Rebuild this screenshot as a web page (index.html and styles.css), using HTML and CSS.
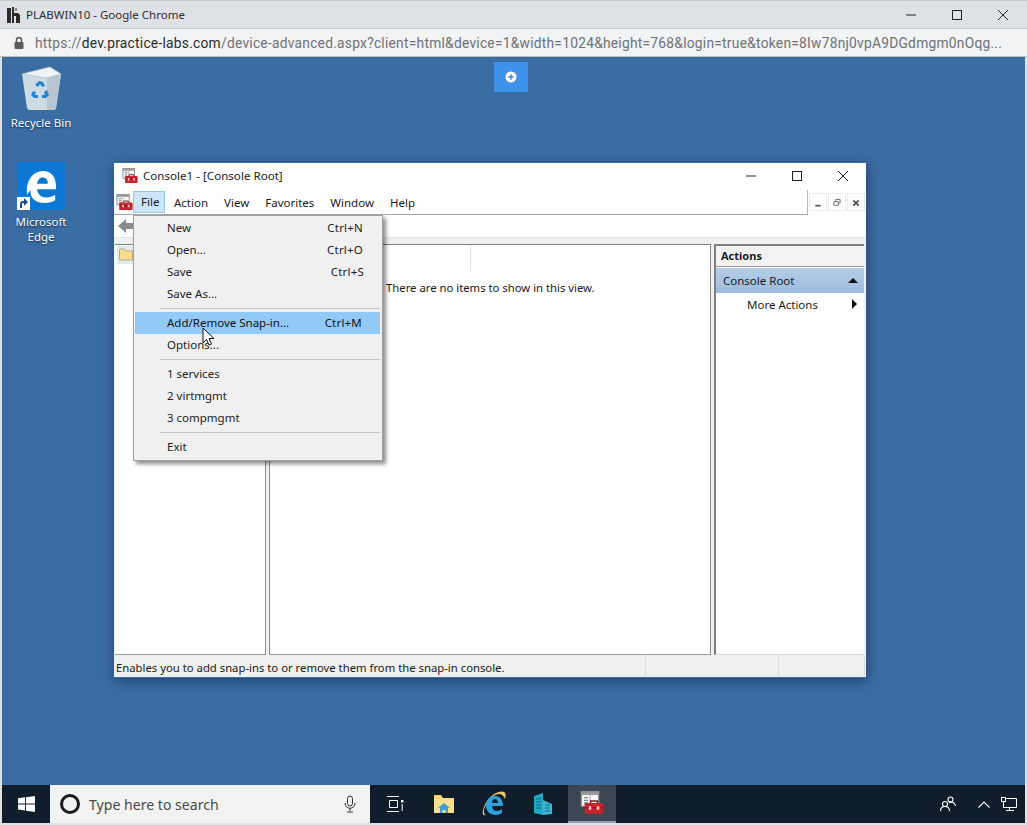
FILE: index.html
```html
<!DOCTYPE html>
<html lang="en">
<head>
<meta charset="utf-8">
<title>PLABWIN10 - Google Chrome</title>
<link rel="stylesheet" href="styles.css">
</head>
<body>
<svg class="defs" width="0" height="0" aria-hidden="true">
  <symbol id="mmc" viewBox="0 0 18 18">
    <rect x="1" y="0.5" width="13" height="11" fill="#f4f4f4" stroke="#8c8c8c"/>
    <rect x="1" y="0.5" width="13" height="2.5" fill="#9a9a9a"/>
    <path d="M3 5h3M3 7h3M3 9h3" stroke="#8a8a8a"/>
    <path d="M7.5 3v8" stroke="#bdbdbd"/>
    <path d="M7 9h9.500a1 1 0 0 1 1 1v7H3.500v-7a1 1 0 0 1 1-1z" fill="#c8242c"/>
    <path d="M8 9V7.500h5V9" fill="none" stroke="#7c1a1e"/>
    <path d="M3.500 12.500h14" stroke="#8a1a20"/>
    <rect x="6.500" y="11.500" width="2" height="2.500" fill="#f0c8c0"/>
    <rect x="12.500" y="11.500" width="2" height="2.500" fill="#f0c8c0"/>
  </symbol>
</svg>

<header class="chrome-title">
  <svg class="lab-logo" width="16" height="18" viewBox="0 0 16 18"><path d="M1 2h4v15H1zM6 1h2v6h4l2 2v8h-4v-7H8v7H6z" fill="#2b2b2b"/><path d="M9 2h2v3H9z" fill="#8a8a8a"/></svg>
  <span class="chrome-title-text">PLABWIN10 - Google Chrome</span>
  <div class="caption-btns caption-chrome">
    <svg width="46" height="28" viewBox="0 0 46 28"><path d="M18 15h10" stroke="#222" stroke-width="1"/></svg>
    <svg width="46" height="28" viewBox="0 0 46 28"><rect x="18.500" y="10.500" width="9" height="9" fill="none" stroke="#222"/></svg>
    <svg width="46" height="28" viewBox="0 0 46 28"><path d="M18 10l10 10M28 10L18 20" stroke="#222"/></svg>
  </div>
</header>
<div class="chrome-url">
  <svg width="12" height="14" viewBox="0 0 12 14"><rect x="1.500" y="6" width="9" height="7" rx="1" fill="#5a5a5a"/><path d="M3.500 6.500V4a2.500 2.500 0 0 1 5 0v2.500" fill="none" stroke="#5a5a5a" stroke-width="1.500"/></svg>
  <span class="url"><span class="url-dim">https://</span><span class="url-host">dev.practice-labs.com</span><span class="url-dim">/device-advanced.aspx?client=html&amp;device=1&amp;width=1024&amp;height=768&amp;login=true&amp;token=8Iw78nj0vpA9DGdmgm0nOqg...</span></span>
</div>

<main class="desktop">
  <div class="plus-btn">
    <svg width="12" height="12" viewBox="0 0 12 12"><circle cx="6" cy="6" r="5.500" fill="#fff"/><path d="M6 3.200v5.600M3.200 6h5.600" stroke="#3f92ec" stroke-width="1.600"/></svg>
  </div>

  <div class="desk-icon desk-bin">
    <svg width="42" height="46" viewBox="0 0 42 46">
      <path d="M2 8L30 1l11 7-5 34a3 3 0 0 1-3 2H10a3 3 0 0 1-3-2z" fill="#cfdbe4"/>
      <path d="M2 8L30 1l11 7-14 4z" fill="#eef3f6" stroke="#a9b8c3" stroke-width=".6"/>
      <path d="M27 12l14-4-5 34a3 3 0 0 1-3 2h-6z" fill="#b7c6d1"/>
      <path d="M15 19l4-4 4 1 2 4-3 1-2-3-2 3zM27 24l2 5-3 3h-4v-3h3l-1-3zM13 25l3 1-1 3 3 0v3h-4l-3-3z" fill="#1f86d6"/>
    </svg>
    <span class="desk-label">Recycle Bin</span>
  </div>

  <div class="desk-icon desk-edge">
    <div class="edge-tile">
      <svg width="31" height="33" viewBox="0 0 34 36"><path d="M1 20C2 8 10 1 19 1c9 0 14 7 14 18v2H12c1 6 5 9 10 9 4 0 7-1 10-3v6c-3 2-7 3-11 3C11 36 4 31 5 22c-1 1-3 3-4 5zM12 15h12c0-4-2-7-6-7-3 0-5 3-6 7z" fill="#fff"/></svg>
      <span class="shortcut"><svg width="12" height="12" viewBox="0 0 12 12"><path d="M3 11V7c0-2 1-3 3-3h1V1l4 4-4 4V6H6C5 6 5 7 5 8v3z" fill="#1c4e8a"/></svg></span>
    </div>
    <span class="desk-label">Microsoft Edge</span>
  </div>

  <section class="window">
    <div class="win-title">
      <svg class="mmc-ic" width="16" height="16"><use href="#mmc"/></svg>
      <span class="win-title-text">Console1 - [Console Root]</span>
      <div class="caption-btns">
        <svg width="46" height="28" viewBox="0 0 46 28"><path d="M18 15h10" stroke="#222"/></svg>
        <svg width="46" height="28" viewBox="0 0 46 28"><rect x="18.500" y="10.500" width="9" height="9" fill="none" stroke="#222"/></svg>
        <svg width="46" height="28" viewBox="0 0 46 28"><path d="M18 10l10 10M28 10L18 20" stroke="#222"/></svg>
      </div>
    </div>
    <nav class="win-menu">
      <svg class="mmc-menu" width="17" height="17"><use href="#mmc"/></svg>
      <span class="mi mi-active">File</span>
      <span class="mi">Action</span>
      <span class="mi">View</span>
      <span class="mi">Favorites</span>
      <span class="mi">Window</span>
      <span class="mi">Help</span>
      <div class="mdi-btns">
        <span class="mdi-btn"><svg width="18" height="18" viewBox="0 0 18 18"><path d="M6 12h6" stroke="#555" stroke-width="2"/></svg></span>
        <span class="mdi-btn"><svg width="18" height="18" viewBox="0 0 18 18"><path d="M7.500 7V5h5v4h-2M5.500 7.500h5v4h-5z" fill="none" stroke="#666"/></svg></span>
        <span class="mdi-btn"><svg width="18" height="18" viewBox="0 0 18 18"><path d="M6 6l6 6M12 6l-6 6" stroke="#555" stroke-width="2"/></svg></span>
      </div>
    </nav>
    <div class="win-toolbar">
      <svg width="16" height="16" viewBox="0 0 16 16"><path d="M8 1v4h8v6H8v4L0 8z" fill="#8c8c8c"/></svg>
    </div>
    <div class="win-band"></div>
    <div class="panes">
      <div class="pane pane-tree">
        <div class="tree-root"><svg width="14" height="13" viewBox="0 0 14 13"><path d="M.5 12V2l1-1h4l1 2h7v9z" fill="#f6dc90" stroke="#c9ad62"/></svg></div>
      </div>
      <div class="pane pane-list">
        <div class="list-head"><span class="list-col"></span></div>
        <p class="empty-msg">There are no items to show in this view.</p>
      </div>
      <aside class="pane-actions">
        <div class="act-head">Actions</div>
        <div class="act-section"><span>Console Root</span><span class="tri-up"></span></div>
        <div class="act-item"><span>More Actions</span><span class="tri-right"></span></div>
      </aside>
    </div>
    <footer class="statusbar">
      <span class="status-main">Enables you to add snap-ins to or remove them from the snap-in console.</span>
      <span class="status-cell"></span>
      <span class="status-cell status-last"></span>
    </footer>
  </section>

  <div class="file-menu">
    <div class="fm-row"><span>New</span><span class="fm-key">Ctrl+N</span></div>
    <div class="fm-row"><span>Open...</span><span class="fm-key">Ctrl+O</span></div>
    <div class="fm-row"><span>Save</span><span class="fm-key fm-key-s">Ctrl+S</span></div>
    <div class="fm-row"><span>Save As...</span></div>
    <div class="fm-sep"></div>
    <div class="fm-row fm-hot"><span>Add/Remove Snap-in...</span><span class="fm-key">Ctrl+M</span></div>
    <div class="fm-row"><span>Options...</span></div>
    <div class="fm-sep"></div>
    <div class="fm-row"><span>1 services</span></div>
    <div class="fm-row"><span>2 virtmgmt</span></div>
    <div class="fm-row"><span>3 compmgmt</span></div>
    <div class="fm-sep"></div>
    <div class="fm-row"><span>Exit</span></div>
  </div>

  <svg class="cursor" width="14" height="20" viewBox="0 0 14 20"><path d="M1 1v15l3.500-3.500L7 18l2.500-1-2.500-5.500h5z" fill="#fff" stroke="#111" stroke-width="1"/></svg>
</main>

<footer class="taskbar">
  <div class="start"><svg width="17" height="16" viewBox="0 0 18 17"><path d="M0 2.500L7.500 1.400v6.500H0zM8.500 1.300L18 0v7.900H8.500zM0 8.900h7.500v6.600L0 14.400zM8.500 8.900H18V17l-9.500-1.300z" fill="#fff"/></svg></div>
  <div class="search">
    <span class="cortana"></span>
    <span class="search-text">Type here to search</span>
    <svg class="mic" width="12" height="18" viewBox="0 0 12 18"><rect x="3.500" y="1" width="5" height="10" rx="2.500" fill="none" stroke="#333"/><path d="M1 8c0 7 10 7 10 0M6 13v3M3 17h6" fill="none" stroke="#333"/></svg>
  </div>
  <div class="task-icons">
    <span class="tb-slot"><svg width="18" height="16" viewBox="0 0 18 16"><path d="M1 .5h12M1 15.500h12M3.500 4.500h8v7h-8z" fill="none" stroke="#fff"/><rect x="15" y="4" width="2.500" height="2.500" fill="#fff"/><path d="M16.200 8v7" stroke="#fff"/></svg></span>
    <span class="tb-slot"><svg width="22" height="20" viewBox="0 0 22 20"><path d="M1 19V1h7l2 3h11v15z" fill="#f5d672"/><path d="M1 5h20v14H1z" fill="#f9e08c"/><path d="M7 19v-6h8v6h-2.500v-3h-3v3z" fill="#3f9fd6"/><path d="M5 14l6-5 6 5z" fill="#3f9fd6"/></svg></span>
    <span class="tb-slot"><svg width="24" height="26" viewBox="0 0 24 26"><path d="M4 24C-1 26 0 18 5 10 10 3 18-1 22 1c2 1 2 4 1 7-1-3-3-5-6-5C12 3 6 9 3 16c-2 5-1 7 1 8z" fill="#e8c766"/><path d="M4 15c0-6 4-10 9-10s8 4 8 10H10c0 3 2 5 5 5 2 0 4-1 5-2v4c-2 1-4 2-6 2-6 0-10-4-10-9zm6-3h6c0-2-1-4-3-4s-3 2-3 4z" fill="#2da3dc"/></svg></span>
    <span class="tb-slot"><svg width="22" height="24" viewBox="0 0 20 24"><path d="M1 4l9-3v22l-9-2z" fill="#20a8c4"/><path d="M10 8l9 4v10l-9 1z" fill="#3fb7d2"/><path d="M3 7h5M3 10h5M3 13h5M3 16h5M12 13h5M12 16h5M12 19h5" stroke="#0b6d87" stroke-width="1"/></svg></span>
    <span class="tb-slot tb-active"><svg width="24" height="26"><use href="#mmc"/></svg></span>
  </div>
  <div class="tray">
    <svg width="16" height="16" viewBox="0 0 16 16"><circle cx="10.500" cy="3.500" r="2.500" fill="none" stroke="#fff" stroke-width="1.100"/><circle cx="5" cy="8" r="2.500" fill="none" stroke="#fff" stroke-width="1.100"/><path d="M.5 15c0-3 2-4.500 4.500-4.500S9.500 12 9.500 15M9 7c1-.5 1.500-1 1.500-1 2.500 0 4.500 1.500 5 4" fill="none" stroke="#fff" stroke-width="1.100"/></svg>
    <svg class="tray-chev" width="12" height="7" viewBox="0 0 12 7"><path d="M.5 6.500L6 1l5.500 5.500" fill="none" stroke="#fff" stroke-width="1.100"/></svg>
    <svg width="16" height="14" viewBox="0 0 16 14"><path d="M4.500 1.500h11v9h-13V6M8.500 10.500v3M5 13.500h8" fill="none" stroke="#fff"/><rect x=".5" y=".5" width="4" height="4" fill="none" stroke="#fff"/><path d="M2.500 4.500v6" stroke="#fff"/></svg>
  </div>
</footer>
</body>
</html>
```

FILE: styles.css
```css
* { box-sizing: border-box; }
html, body { margin: 0; padding: 0; }
body {
  width: 1027px;
  height: 825px;
  overflow: hidden;
  display: flex;
  flex-direction: column;
  background: #dfe1e5;
  font-family: "Noto Sans", "Open Sans", sans-serif;
  font-size: 11.500px;
  color: #1a1a1a;
}
.defs { position: absolute; }

.chrome-title {
  height: 28px;
  flex: none;
  display: flex;
  align-items: center;
  background: #dee1e6;
  border-top: 1px solid #c9cbce;
  padding-left: 6px;
}
.lab-logo { margin-right: 4px; }
.chrome-title-text { font-size: 11.500px; color: #2e2e2e; }
.caption-btns { margin-left: auto; display: flex; }
.caption-chrome { margin-right: 1px; }
.caption-btns svg { display: block; margin-top: -1px; }

.chrome-url {
  height: 29px;
  flex: none;
  display: flex;
  align-items: center;
  gap: 10px;
  padding-left: 13px;
  background: #f1f3f4;
  border-top: 1px solid #c6c8cb;
  border-bottom: 1px solid #b9bbbe;
}
.url { font-family: "Roboto", sans-serif; font-size: 13.800px; letter-spacing: .24px; white-space: nowrap; }
.url-dim { color: #6f7276; }
.url-host { color: #2b2b2b; }

.desktop {
  position: relative;
  flex: none;
  height: 728px;
  margin: 0 2px;
  background: #3b6da5;
}
.plus-btn {
  position: absolute;
  left: 492px;
  top: 5px;
  width: 34px;
  height: 30px;
  display: flex;
  align-items: center;
  justify-content: center;
  background: #3f92ec;
}
.desk-icon {
  position: absolute;
  display: flex;
  flex-direction: column;
  align-items: center;
  width: 78px;
  color: #fff;
  text-align: center;
}
.desk-label { font-size: 11.500px; line-height: 15px; text-shadow: 0 1px 2px #0c2138; }
.desk-bin { left: 0; top: 9px; }
.desk-bin .desk-label { margin-top: 3px; }
.desk-edge { left: 0; top: 105px; }
.desk-edge .desk-label { width: 62px; margin-top: 4px; }
.edge-tile {
  position: relative;
  width: 48px;
  height: 48px;
  background: #0b78d6;
  display: flex;
  align-items: center;
  justify-content: center;
}
.shortcut {
  position: absolute;
  left: 0;
  bottom: 0;
  width: 13px;
  height: 13px;
  background: #fff;
  display: flex;
}

.window {
  position: absolute;
  left: 112px;
  top: 105px;
  width: 752px;
  height: 516px;
  display: flex;
  flex-direction: column;
  background: #fff;
  border-top: 1px solid #2b6cab;
  box-shadow: 1px 3px 12px rgba(10, 30, 60, .55);
}
.win-title { height: 27px; flex: none; display: flex; align-items: center; padding: 0 0 2px 8px; }
.mmc-ic { margin-right: 5px; flex: none; }
.win-title-text { font-size: 11.600px; color: #1a1a1a; }
.win-menu {
  height: 25px;
  flex: none;
  display: flex;
  align-items: center;
  position: relative;
  padding-left: 2px;
  border-bottom: 1px solid #a8a8a8;
}
.mmc-menu { flex: none; }
.mi { padding: 0 8px; line-height: 21px; }
.mi-active { background: #cde6f7; box-shadow: inset 0 0 0 1px #98c8e8; height: 22px; width: 32px; margin-right: 1px; }
.mdi-btns { margin-left: auto; height: 25px; display: flex; align-items: center; gap: 1px; padding: 0 1px; border-left: 1px solid #b8b8b8; background: #fff; }
.mdi-btn { width: 18px; height: 18px; border: 1px solid #ececec; display: flex; }
.win-toolbar { height: 22px; flex: none; padding: 3px 0 0 4px; display: flex; }
.win-band { height: 7px; flex: none; background: #f0f0f0; border-top: 1px solid #e3e3e3; }
.panes { flex: 1; min-height: 0; display: flex; background: #f0f0f0; padding-left: 1px; }
.pane { background: #fff; border-top: 1px solid #7e7e7e; border-bottom: 1px solid #9a9a9a; }
.pane-tree { width: 151px; border-right: 1px solid #8c8c8c; flex: none; }
.tree-root { width: 18px; height: 18px; margin: 1px 0 0 2px; background: #dcebf7; padding: 2px; display: flex; }
.pane-list { width: 442px; margin-left: 3px; flex: none; border-left: 1px solid #8c8c8c; border-right: 1px solid #8c8c8c; }
.list-head { height: 26px; display: flex; }
.list-col { width: 201px; border-right: 1px solid #e2e2e2; }
.empty-msg { margin: 9px 0 0 116px; font-size: 11.300px; color: #1a1a1a; }
.pane-actions {
  width: 150px;
  margin-left: 3px;
  flex: none;
  background: #fff;
  border-left: 2px solid #7e7e7e;
  border-top: 2px solid #7e7e7e;
  border-bottom: 1px solid #d8d8d8;
}
.act-head { height: 21px; line-height: 20px; padding-left: 5px; font-weight: 700; font-size: 11px; background: #f2f2f2; border-bottom: 1px solid #9c9c9c; }
.act-section {
  height: 25px;
  margin-top: 1px;
  display: flex;
  align-items: center;
  justify-content: space-between;
  padding: 0 6px 0 7px;
  background: linear-gradient(#b5cee8, #9dbcdd);
}
.tri-up { width: 0; height: 0; border-left: 5px solid transparent; border-right: 5px solid transparent; border-bottom: 5px solid #111; }
.act-item { height: 22px; display: flex; align-items: center; justify-content: space-between; padding: 0 7px 0 31px; }
.tri-right { width: 0; height: 0; border-top: 5px solid transparent; border-bottom: 5px solid transparent; border-left: 5px solid #111; }
.statusbar {
  height: 23px;
  flex: none;
  display: flex;
  align-items: center;
  background: #f0f0f0;
  border-bottom: 1px solid #3a6ea5;
}
.status-main { width: 531px; padding-left: 2px; padding-top: 2px; font-size: 11.300px; white-space: nowrap; }
.status-cell { width: 133px; height: 100%; border-left: 1px solid #dcdcdc; }
.status-last { width: 87px; border-right: 1px solid #dcdcdc; }

.file-menu {
  position: absolute;
  left: 131px;
  top: 158px;
  width: 250px;
  height: 246px;
  padding: 1px 2px 0 1px;
  background: #f0f0f0;
  border: 1px solid #a0a0a0;
  box-shadow: 3px 3px 4px rgba(0, 0, 0, .45);
}
.fm-row {
  height: 22px;
  display: flex;
  align-items: center;
  justify-content: space-between;
  padding: 0 17px 2px 32px;
  color: #222;
}
.fm-key { letter-spacing: .2px; }
.fm-key-s { margin-right: -1px; }
.fm-hot { background: #91c9f7; color: #111; padding-right: 18px; }
.fm-sep { height: 1px; margin: 3px 0 3px 25px; background: #c4c4c4; }
.cursor { position: absolute; left: 200px; top: 270px; }

.taskbar {
  flex: 1;
  display: flex;
  align-items: stretch;
  margin: 0 2px 2px;
  background: #101d2c;
}
.start { width: 48px; display: flex; align-items: center; justify-content: center; }
.search {
  width: 320px;
  display: flex;
  align-items: center;
  background: #f2f2f2;
  padding-left: 10px;
}
.cortana { width: 20px; height: 20px; border-radius: 50%; border: 3px solid #1a1a1a; }
.search-text { margin-left: 9px; font-size: 14.100px; color: #4a4a4a; }
.mic { margin-left: auto; margin-right: 14px; }
.task-icons { display: flex; }
.tb-slot { width: 49.500px; display: flex; align-items: center; justify-content: center; }
.tb-active { width: 48px; background: #3c4653; border-bottom: 2px solid #8fa3b8; }
.tray { margin-left: auto; display: flex; align-items: center; padding-right: 8px; }
.tray-chev { margin: 0 11px 0 22px; }
```
